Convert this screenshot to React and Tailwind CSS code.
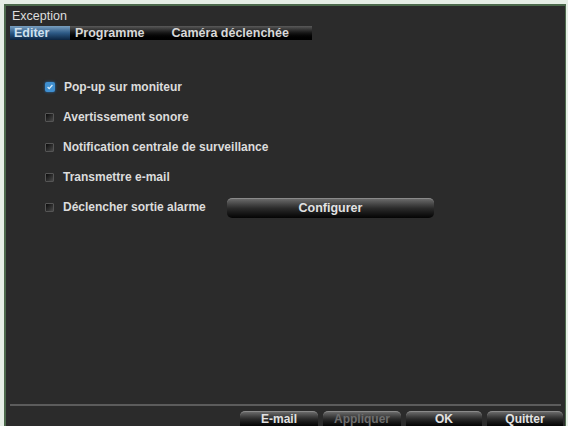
import React from 'react';

const items = [
  { label: 'Pop-up sur moniteur', checked: true },
  { label: 'Avertissement sonore' },
  { label: 'Notification centrale de surveillance' },
  { label: 'Transmettre e-mail' },
  { label: 'Déclencher sortie alarme', button: 'Configurer' },
];

const Check = ({ checked }) =>
  checked ? (
    <span className="flex h-[10px] w-[10px] shrink-0 items-center justify-center rounded-[2px] bg-[#3f8fd0] shadow-[0_0_3px_#2a6fb0]">
      <svg viewBox="0 0 10 10" className="h-[8px] w-[8px]">
        <path d="M2 5 L4 7 L8 2.5" fill="none" stroke="#dbeefc" strokeWidth="1.6" />
      </svg>
    </span>
  ) : (
    <span className="h-[9px] w-[9px] shrink-0 rounded-[1px] border border-[#555] bg-gradient-to-br from-[#0d0d0d] to-[#4a4a4a]" />
  );

const Btn = ({ children, className = '', dim }) => (
  <div
    className={`flex items-center justify-center rounded-t-[5px] border-t border-[#8a8a8a] bg-gradient-to-b from-[#6a6a6a] via-[#2a2a2a] to-[#050505] font-bold ${dim ? 'text-[#6e6e6e]' : 'text-[#e2e2e2]'} ${className}`}
  >
    {children}
  </div>
);

export default function App() {
  return (
    <div
      className="h-[426px] w-[568px] overflow-hidden bg-[#e6eee6] pl-[4px] pt-[4px]"
      style={{ fontFamily: '"Liberation Sans", Arial, sans-serif' }}
    >
      <div className="flex h-[422px] w-[562px] flex-col border-l-2 border-t-2 border-r border-[#4d6a4d] bg-[#2b2b2b]">
        <div className="px-[6px] pt-[3px] text-[12.5px] leading-[15px] text-[#dedede]">Exception</div>
        <div className="mt-[2px] flex h-[14px] items-stretch pl-[4px] text-[12.5px] font-bold leading-[14px]">
          <div className="w-[60px] bg-gradient-to-b from-[#7aa0c0] via-[#2d5a86] to-[#0c2440] pl-[4px] text-[#cfe0ee]">Editer</div>
          <div className="flex w-[242px] bg-gradient-to-b from-[#5a5a5a] via-[#151515] to-[#000] text-[#d8d8d8]">
            <span className="pl-[5px]">Programme</span>
            <span className="pl-[27px]">Caméra déclenchée</span>
          </div>
        </div>

        <div className="flex flex-col gap-[18px] pl-[39px] pt-[41px] text-[12px] font-bold text-[#dcdcdc]">
          {items.map((it) => (
            <div key={it.label} className="flex h-[12px] items-center">
              <Check checked={it.checked} />
              <span className={`ml-[9px] whitespace-nowrap ${it.button ? 'w-[164px]' : ''}`}>{it.label}</span>
              {it.button && (
                <Btn className="mt-[2px] h-[20px] w-[207px] shrink-0 rounded-[5px] text-[12.5px]">{it.button}</Btn>
              )}
            </div>
          ))}
        </div>

        <div className="flex-1" />
        <div className="mx-[4px] h-[2px] bg-[#5c5c5c]" />
        <div className="flex justify-end gap-[5px] pr-[2px] pt-[5px] text-[12px]">
          <Btn className="h-[15px] w-[78px]">E-mail</Btn>
          <Btn className="h-[15px] w-[78px]" dim>Appliquer</Btn>
          <Btn className="h-[15px] w-[76px]">OK</Btn>
          <Btn className="h-[15px] w-[76px]">Quitter</Btn>
        </div>
      </div>
    </div>
  );
}
